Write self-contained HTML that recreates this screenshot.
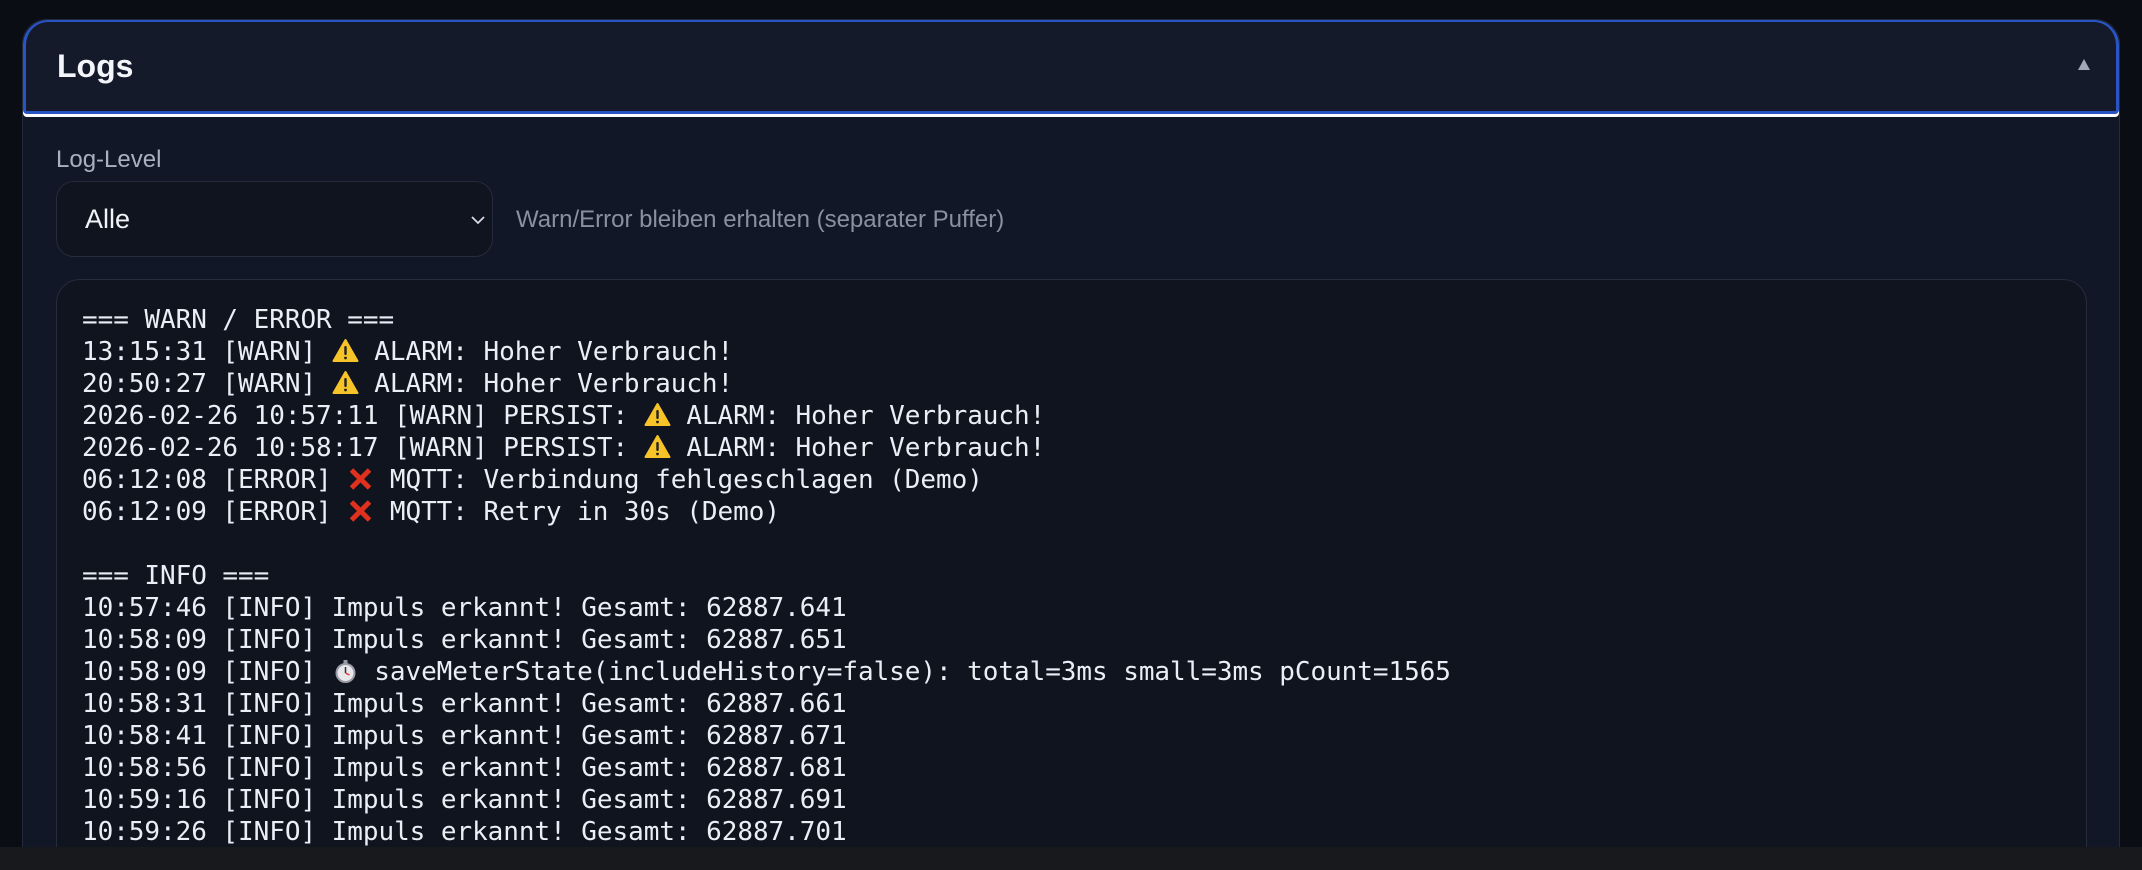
<!DOCTYPE html>
<html><head><meta charset="utf-8"><style>
html,body{margin:0;padding:0;width:2142px;height:870px;overflow:hidden}
body{background:#0b0d15;position:relative;font-family:"Liberation Sans",sans-serif}
.panel{position:absolute;left:22px;top:19px;width:2096px;height:828px;background:#111726;border:1px solid #232a3a;border-bottom:none;border-radius:25px 25px 0 0;overflow:hidden}
.head{position:absolute;left:0;top:0;right:0;height:94px;background:#141a2a;border:3px solid #2954c6;border-top-width:2px;border-radius:25px 25px 4px 4px;box-sizing:border-box;box-shadow:0 3px 0 #ffffff}
.head h1{margin:0;position:absolute;left:31px;top:26px;font-size:32px;font-weight:bold;color:#f3f5fa}
.tri{position:absolute;right:26px;top:37px;width:0;height:0;border-left:6px solid transparent;border-right:6px solid transparent;border-bottom:11px solid #a3a8b6}
.lbl{position:absolute;left:33px;top:126px;font-size:24px;color:#aab0bd}
.sel{position:absolute;left:33px;top:161px;width:437px;height:76px;box-sizing:border-box;border:1px solid #262c3b;border-radius:18px;background:#10141f}
.sel span{position:absolute;left:28px;top:22px;font-size:27px;color:#f1f3f8}
.sel svg{position:absolute;right:6px;top:32px}
.hint{position:absolute;left:493px;top:186px;font-size:24px;color:#8a90a0}
.box{position:absolute;left:33px;top:259px;width:2031px;height:700px;box-sizing:border-box;border:1px solid #262c3b;border-radius:24px;background:#10141f;padding:24px 0 0 25px;font-family:"DejaVu Sans Mono","Liberation Mono",monospace;font-size:26px;line-height:32px;color:#eceef5;white-space:pre;letter-spacing:-0.05px}
.box div{height:32px}
.e{display:inline-block;width:27px;height:26px;vertical-align:-4px}
.bottom{position:absolute;left:0;top:847px;width:2142px;height:23px;background:#18191c;z-index:5}
</style></head><body>
<div class="panel">
 <div class="head"><h1>Logs</h1><div class="tri"></div></div>
 <div class="lbl">Log-Level</div>
 <div class="sel"><span>Alle</span><svg width="16" height="12" viewBox="0 0 16 12"><path d="M2 3 L8 9 L14 3" stroke="#d8dbe3" stroke-width="1.8" fill="none"/></svg></div>
 <div class="hint">Warn/Error bleiben erhalten (separater Puffer)</div>
 <div class="box"><div>=== WARN / ERROR ===</div><div>13:15:31 [WARN] <svg class="e" viewBox="0 0 26 26"><path d="M13 2 L25 23 L1 23 Z" fill="#f6c428" stroke="#f6c428" stroke-width="2" stroke-linejoin="round"/><rect x="11.8" y="8" width="2.4" height="9" rx="1" fill="#222"/><circle cx="13" cy="20" r="1.4" fill="#222"/></svg> ALARM: Hoher Verbrauch!</div><div>20:50:27 [WARN] <svg class="e" viewBox="0 0 26 26"><path d="M13 2 L25 23 L1 23 Z" fill="#f6c428" stroke="#f6c428" stroke-width="2" stroke-linejoin="round"/><rect x="11.8" y="8" width="2.4" height="9" rx="1" fill="#222"/><circle cx="13" cy="20" r="1.4" fill="#222"/></svg> ALARM: Hoher Verbrauch!</div><div>2026-02-26 10:57:11 [WARN] PERSIST: <svg class="e" viewBox="0 0 26 26"><path d="M13 2 L25 23 L1 23 Z" fill="#f6c428" stroke="#f6c428" stroke-width="2" stroke-linejoin="round"/><rect x="11.8" y="8" width="2.4" height="9" rx="1" fill="#222"/><circle cx="13" cy="20" r="1.4" fill="#222"/></svg> ALARM: Hoher Verbrauch!</div><div>2026-02-26 10:58:17 [WARN] PERSIST: <svg class="e" viewBox="0 0 26 26"><path d="M13 2 L25 23 L1 23 Z" fill="#f6c428" stroke="#f6c428" stroke-width="2" stroke-linejoin="round"/><rect x="11.8" y="8" width="2.4" height="9" rx="1" fill="#222"/><circle cx="13" cy="20" r="1.4" fill="#222"/></svg> ALARM: Hoher Verbrauch!</div><div>06:12:08 [ERROR] <svg class="e" viewBox="0 0 26 26"><path d="M4 4 L22 22 M22 4 L4 22" stroke="#e0301e" stroke-width="5"/></svg> MQTT: Verbindung fehlgeschlagen (Demo)</div><div>06:12:09 [ERROR] <svg class="e" viewBox="0 0 26 26"><path d="M4 4 L22 22 M22 4 L4 22" stroke="#e0301e" stroke-width="5"/></svg> MQTT: Retry in 30s (Demo)</div><div> </div><div>=== INFO ===</div><div>10:57:46 [INFO] Impuls erkannt! Gesamt: 62887.641</div><div>10:58:09 [INFO] Impuls erkannt! Gesamt: 62887.651</div><div>10:58:09 [INFO] <svg class="e" viewBox="0 0 26 26"><circle cx="13" cy="15" r="9" fill="#e8e8ec" stroke="#9a9aa4" stroke-width="2"/><rect x="11" y="2" width="4" height="4" fill="#9a9aa4"/><path d="M13 15 L13 9" stroke="#333" stroke-width="1.5"/><path d="M13 15 L17 17" stroke="#d33" stroke-width="1.3"/></svg> saveMeterState(includeHistory=false): total=3ms small=3ms pCount=1565</div><div>10:58:31 [INFO] Impuls erkannt! Gesamt: 62887.661</div><div>10:58:41 [INFO] Impuls erkannt! Gesamt: 62887.671</div><div>10:58:56 [INFO] Impuls erkannt! Gesamt: 62887.681</div><div>10:59:16 [INFO] Impuls erkannt! Gesamt: 62887.691</div><div>10:59:26 [INFO] Impuls erkannt! Gesamt: 62887.701</div><div>10:59:46 [INFO] Impuls erkannt! Gesamt: 62887.711</div></div>
</div>
<div class="bottom"></div>
</body></html>
